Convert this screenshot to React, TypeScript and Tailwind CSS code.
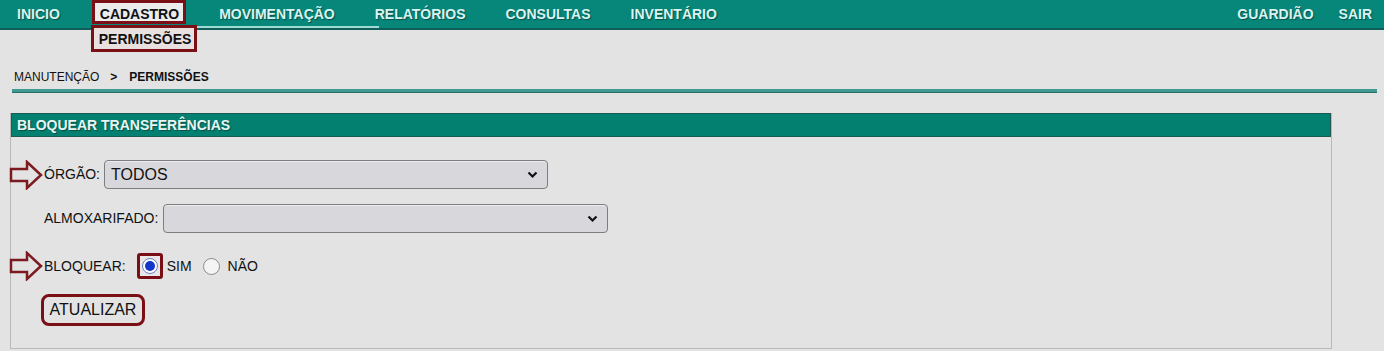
import React from "react";

const navItems = ["INICIO", "CADASTRO", "MOVIMENTAÇÃO", "RELATÓRIOS", "CONSULTAS", "INVENTÁRIO"];

const Arrow = () => (
  <svg width="34" height="30" viewBox="0 0 34 30" className="absolute left-[-35px] top-1/2 -translate-y-1/2">
    <path
      d="M2 9 H18 V2 L32 15 L18 28 V21 H2 Z"
      fill="none"
      stroke="#7c1a20"
      strokeWidth="2.5"
      strokeLinejoin="miter"
    />
  </svg>
);

const Chevron = () => (
  <svg width="11" height="8" viewBox="0 0 11 8" className="shrink-0">
    <path d="M1.5 1.5 L5.5 5.5 L9.5 1.5" fill="none" stroke="#111" strokeWidth="2.2" />
  </svg>
);

const SelectBox = ({ width, value }: { width: string; value?: string }) => (
  <div
    className={`flex h-[29px] ${width} items-center justify-between rounded-[4px] border border-[#7d7d80] bg-[#d8d8dc] pl-[6px] pr-[9px] shadow-[inset_0_1px_0_#eee]`}
  >
    <span className="text-[16px] text-[#111]">{value}</span>
    <Chevron />
  </div>
);

export default function App() {
  return (
    <div className="min-h-[351px] w-full bg-[#e3e3e3] font-['Liberation_Sans',Arial,sans-serif] text-[#111]">
      {/* top menu */}
      <div className="relative flex h-[30px] items-center justify-between border-b-2 border-[#0f5e57] bg-[#06877a] pl-[17px] pr-[12px] leading-[16px]">
        <div className="flex items-center gap-[40px]">
          {navItems.map((item) =>
            item === "CADASTRO" ? (
              <div key={item} className="relative">
                <div className="absolute left-[-8px] top-[-6px] h-[24px] w-[94px] border-[3px] border-[#7a1016] bg-[#ececec]" />
                <span className="relative z-10 text-[14px] font-bold text-[#111]">{item}</span>
                <div className="absolute left-[-9px] top-[19px] z-20 flex h-[27px] w-[106px] items-center border-[3px] border-[#7a1016] bg-[#e9e0e0] pl-[5px]">
                  <span className="text-[14px] font-bold text-[#111]">PERMISSÕES</span>
                </div>
              </div>
            ) : (
              <div key={item} className="relative">
                <span className="text-[14px] font-bold text-[#d8f4f1] [text-shadow:1px_1px_1px_#0b4f48]">{item}</span>
                {item === "MOVIMENTAÇÃO" && (
                  <div className="absolute left-[-28px] right-[-44px] top-[20px] h-[1.5px] bg-[#9fdcd6]" />
                )}
              </div>
            )
          )}
        </div>
        <div className="flex items-center gap-[25px]">
          <span className="text-[14px] font-bold text-[#d8f4f1] [text-shadow:1px_1px_1px_#0b4f48]">GUARDIÃO</span>
          <span className="text-[14px] font-bold text-[#d8f4f1] [text-shadow:1px_1px_1px_#0b4f48]">SAIR</span>
        </div>
      </div>

      {/* breadcrumb */}
      <div className="pl-[14px] pt-[40px] text-[12px] leading-[14px]">
        <span>MANUTENÇÃO</span>
        <span className="ml-[11px] font-bold">&gt;</span>
        <span className="ml-[12px] font-bold">PERMISSÕES</span>
      </div>
      <div className="ml-[12px] mr-[7px] mt-[5px] h-[3px] bg-[#3f9a92] shadow-[0_1px_0_#2d6d67]" />

      {/* panel */}
      <div className="ml-[10px] mr-[52px] mt-[21px] border border-t-0 border-[#b9b9b9]">
        <div className="flex h-[24px] items-center border border-[#1d5a53] bg-[#03806f] pl-[5px]">
          <span className="text-[14px] font-bold text-[#e6f7f5] [text-shadow:1px_1px_1px_#0b4f48]">
            BLOQUEAR TRANSFERÊNCIAS
          </span>
        </div>
        <div className="flex flex-col items-start pb-[22px] pl-[33px] pt-[23px]">
          <div className="relative flex items-center gap-[4px]">
            <Arrow />
            <span className="text-[14px]">ÓRGÃO:</span>
            <SelectBox width="w-[444px]" value="TODOS" />
          </div>
          <div className="mt-[15px] flex items-center gap-[5px]">
            <span className="text-[14px]">ALMOXARIFADO:</span>
            <SelectBox width="w-[445px]" />
          </div>
          <div className="relative mt-[19px] flex h-[28px] items-center">
            <Arrow />
            <span className="text-[14px]">BLOQUEAR:</span>
            <div className="ml-[11px] flex h-[26px] w-[26px] items-center justify-center rounded-[3px] border-[3px] border-[#7a1016] bg-[#e8e8e8]">
              <div className="flex h-[16px] w-[16px] items-center justify-center rounded-full border border-[#6a7fb8] bg-white">
                <div className="h-[10px] w-[10px] rounded-full bg-[#1236c8]" />
              </div>
            </div>
            <span className="ml-[4px] text-[14px]">SIM</span>
            <div className="ml-[11px] h-[17px] w-[17px] rounded-full border border-[#8a8a8a] bg-[#f4f4f4]" />
            <span className="ml-[8px] text-[14px]">NÃO</span>
          </div>
          <div className="-ml-[3px] mt-[14px] flex h-[32px] w-[104px] items-center justify-center rounded-[8px] border-[3px] border-[#7a1016] bg-[#e3e3e3]">
            <span className="text-[16px]">ATUALIZAR</span>
          </div>
        </div>
      </div>
    </div>
  );
}
